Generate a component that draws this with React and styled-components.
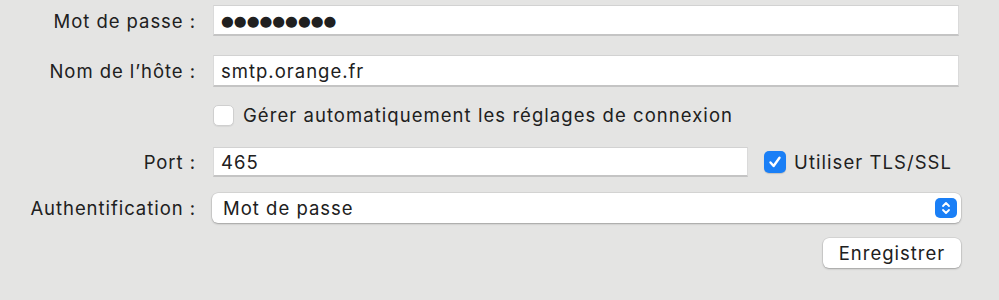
import React from "react";
import styled, { createGlobalStyle } from "styled-components";

const GlobalStyle = createGlobalStyle`
  html, body {
    margin: 0;
    padding: 0;
    background: #e4e4e3;
  }
  body {
    font-family: "Inter", "Liberation Sans", sans-serif;
    color: #202020;
  }
`;

const Form = styled.div`
  width: 999px;
  height: 300px;
  box-sizing: border-box;
  padding: 5px 40px 0 0;
  display: flex;
  flex-direction: column;
`;

const Row = styled.div`
  display: grid;
  grid-template-columns: 195px 1fr;
  column-gap: 18px;
  align-items: center;
  height: ${({ h }) => h}px;
  margin-top: ${({ top }) => top || 0}px;
`;

const Label = styled.div`
  text-align: right;
  font-size: 18.5px;
  letter-spacing: 0.95px;
  white-space: nowrap;
  margin-right: -1px;
`;

const Field = styled.div`
  height: 100%;
  box-sizing: border-box;
  background: #fff;
  border-top: 1px solid #d2d2d2;
  border-left: 1px solid #dadada;
  border-right: 1px solid #dadada;
  border-bottom: 2px solid #c4c4c4;
  display: flex;
  align-items: center;
  padding-left: 7px;
  font-size: 18.5px;
  letter-spacing: 1px;
  flex: ${({ grow }) => (grow ? 1 : "none")};
`;

const Dots = styled.span`
  font-family: "DejaVu Sans", sans-serif;
  font-size: 14.7px;
  letter-spacing: 0;
  padding-top: 1px;
`;

const Inline = styled.div`
  display: flex;
  align-items: center;
  height: 100%;
  gap: ${({ gap }) => gap || 0}px;
`;

const Box = styled.span`
  width: ${({ size }) => size}px;
  height: ${({ size }) => size}px;
  box-sizing: border-box;
  border-radius: 5px;
  flex: none;
  display: flex;
  align-items: center;
  justify-content: center;
  background: ${({ checked }) => (checked ? "#1a7ff6" : "#fff")};
  border: ${({ checked }) => (checked ? "none" : "1px solid #cfcfcf")};
  box-shadow: ${({ checked }) =>
    checked ? "0 1px 1px rgba(0,0,0,0.15)" : "0 1px 1px rgba(0,0,0,0.06)"};
`;

const CheckText = styled.span`
  font-size: 18.5px;
  letter-spacing: 1.05px;
  white-space: nowrap;
  margin-right: ${({ right }) => right || 0}px;
`;

const Select = styled.div`
  height: 100%;
  box-sizing: border-box;
  background: #fff;
  border-radius: 6px;
  box-shadow: 0 0 0 0.5px rgba(0, 0, 0, 0.12), 0 1px 2px rgba(0, 0, 0, 0.25);
  display: flex;
  align-items: center;
  justify-content: space-between;
  padding: 0 4px 0 11px;
  font-size: 18.5px;
  letter-spacing: 1px;
  margin-right: -2px;
  margin-left: -1px;
`;

const Stepper = styled.span`
  width: 22px;
  height: 20px;
  border-radius: 5px;
  background: #1a7ff6;
  display: flex;
  align-items: center;
  justify-content: center;
`;

const Actions = styled.div`
  display: flex;
  justify-content: flex-end;
  margin-top: 15px;
  margin-right: -2px;
`;

const Button = styled.button`
  width: 138px;
  height: 30px;
  border: none;
  border-radius: 6px;
  background: #fff;
  box-shadow: 0 0 0 0.5px rgba(0, 0, 0, 0.12), 0 1px 2px rgba(0, 0, 0, 0.25);
  font-family: inherit;
  font-size: 18.5px;
  letter-spacing: 1px;
  color: #202020;
  padding: 0;
`;

const Check = () => (
  <svg width="14" height="14" viewBox="0 0 14 14">
    <path
      d="M2.5 7.5 L5.6 11 L11.5 2.8"
      fill="none"
      stroke="#fff"
      strokeWidth="2.4"
      strokeLinecap="round"
      strokeLinejoin="round"
    />
  </svg>
);

const Chevrons = () => (
  <svg width="10" height="14" viewBox="0 0 10 14">
    <path
      d="M2 5 L5 2 L8 5 M2 9 L5 12 L8 9"
      fill="none"
      stroke="#fff"
      strokeWidth="1.8"
      strokeLinecap="round"
      strokeLinejoin="round"
    />
  </svg>
);

export default function App() {
  return (
    <>
      <GlobalStyle />
      <Form>
        <Row h={31}>
          <Label>Mot de passe :</Label>
          <Field>
            <Dots>●●●●●●●●●</Dots>
          </Field>
        </Row>
        <Row h={32} top={19}>
          <Label>Nom de l’hôte :</Label>
          <Field>smtp.orange.fr</Field>
        </Row>
        <Row h={22} top={17}>
          <span />
          <Inline gap={9}>
            <Box size={21} />
            <CheckText>Gérer automatiquement les réglages de connexion</CheckText>
          </Inline>
        </Row>
        <Row h={30} top={21}>
          <Label>Port :</Label>
          <Inline gap={16}>
            <Field grow>465</Field>
            <Inline gap={8}>
              <Box size={22} checked>
                <Check />
              </Box>
              <CheckText right={7}>Utiliser TLS/SSL</CheckText>
            </Inline>
          </Inline>
        </Row>
        <Row h={30} top={16}>
          <Label>Authentification :</Label>
          <Select>
            <span>Mot de passe</span>
            <Stepper>
              <Chevrons />
            </Stepper>
          </Select>
        </Row>
        <Actions>
          <Button>Enregistrer</Button>
        </Actions>
      </Form>
    </>
  );
}
